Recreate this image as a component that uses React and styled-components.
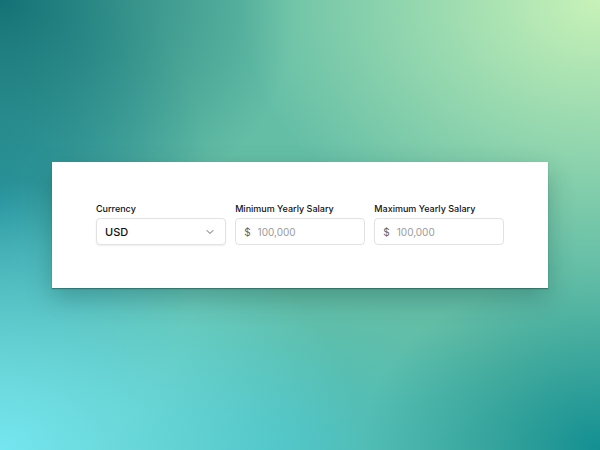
import React from 'react';
import styled, {createGlobalStyle} from 'styled-components';
import {ChevronDown} from 'lucide-react';

const GlobalStyle = createGlobalStyle`
  html, body {
    margin: 0;
    padding: 0;
  }
  body {
    font-family: Inter, "Noto Sans", sans-serif;
  }
`;

const Backdrop = styled.main`
  width: 600px;
  height: 450px;
  display: flex;
  align-items: center;
  justify-content: center;
  overflow: hidden;
  background:
    radial-gradient(ellipse 60% 60% at 100% 0%, #c8f2b8 0%, rgba(200, 242, 184, 0) 100%),
    radial-gradient(ellipse 60% 60% at 0% 100%, #74e6f0 0%, rgba(116, 230, 240, 0) 100%),
    radial-gradient(ellipse 50% 55% at 0% 0%, #147276 0%, rgba(20, 114, 118, 0) 100%),
    radial-gradient(ellipse 40% 40% at 100% 100%, #138f92 0%, rgba(19, 143, 146, 0) 100%),
    radial-gradient(ellipse 35% 60% at 0% 45%, #2a98a2 0%, rgba(42, 152, 162, 0) 100%),
    radial-gradient(ellipse 45% 35% at 45% 100%, #48bec0 0%, rgba(72, 190, 192, 0) 100%),
    #64bea6;
`;

const Card = styled.section`
  width: 496px;
  height: 126px;
  box-sizing: border-box;
  padding: 41px 44px;
  background: #fff;
  box-shadow: 0 1px 1px rgba(0, 40, 40, 0.35), 0 10px 24px rgba(0, 50, 50, 0.28);
`;

const Fields = styled.div`
  display: grid;
  grid-template-columns: repeat(3, minmax(0, 1fr));
  column-gap: 9.5px;
`;

const Field = styled.label`
  display: flex;
  flex-direction: column;
  gap: 3px;
  min-width: 0;
`;

const Caption = styled.span`
  font-size: 9px;
  line-height: 12px;
  font-weight: 500;
  color: #111;
`;

const Box = styled.div`
  height: 27px;
  box-sizing: border-box;
  display: flex;
  align-items: center;
  padding: 0 8px;
  border: 1px solid #e2e2e2;
  border-radius: 4px;
  background: #fff;
  box-shadow: ${({raised}) => (raised ? '0 1px 2px rgba(0,0,0,0.07)' : 'none')};
`;

const Value = styled.span`
  flex: 1;
  font-size: 11px;
  font-weight: 500;
  color: #111;
`;

const Prefix = styled.span`
  font-size: 10px;
  color: #666;
  margin-right: 7px;
`;

const Input = styled.input`
  flex: 1;
  width: 100%;
  min-width: 0;
  border: none;
  outline: none;
  padding: 0;
  font-family: inherit;
  font-size: 10px;
  color: #111;
  background: transparent;
  &::placeholder {
    color: #9a9a9a;
  }
`;

const Chevron = styled(ChevronDown)`
  color: #333;
  margin-right: 1px;
`;

const App = () => {
  return (
    <>
      <GlobalStyle/>
      <Backdrop>
        <Card>
          <Fields>
            <Field>
              <Caption>Currency</Caption>
              <Box raised>
                <Value>USD</Value>
                <Chevron size={12} strokeWidth={1.5}/>
              </Box>
            </Field>
            <Field>
              <Caption>Minimum Yearly Salary</Caption>
              <Box>
                <Prefix>$</Prefix>
                <Input placeholder="100,000"/>
              </Box>
            </Field>
            <Field>
              <Caption>Maximum Yearly Salary</Caption>
              <Box>
                <Prefix>$</Prefix>
                <Input placeholder="100,000"/>
              </Box>
            </Field>
          </Fields>
        </Card>
      </Backdrop>
    </>
  );
};

export default App;
